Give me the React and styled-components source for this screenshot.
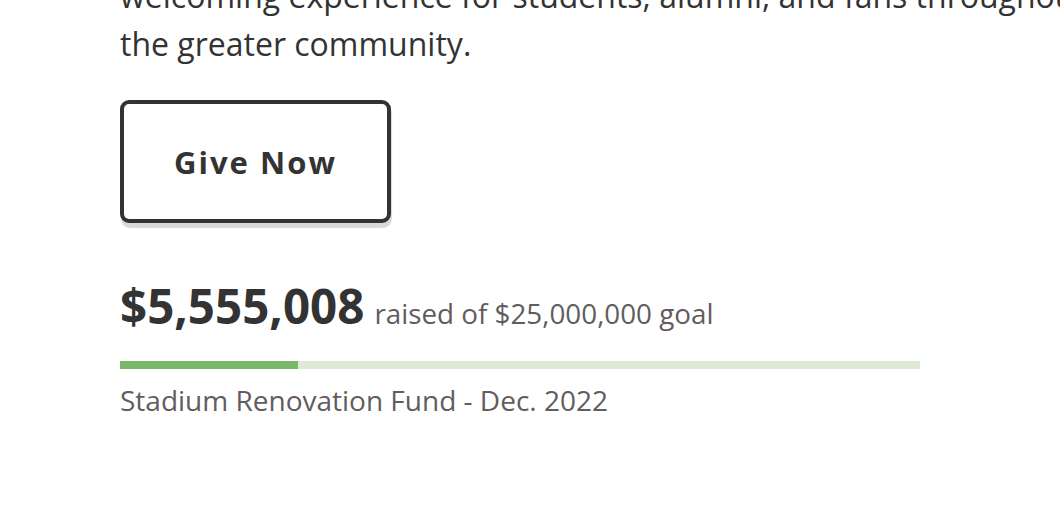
import React from 'react'
import styled, { createGlobalStyle } from 'styled-components'

const GlobalStyle = createGlobalStyle`
  html, body {
    margin: 0;
    padding: 0;
    background: #fff;
    overflow: hidden;
  }
  body {
    font-family: "Open Sans", "Noto Sans", sans-serif;
    color: #333;
  }
`;

const Container = styled.div`
  width: 1060px;
  height: 528px;
  overflow: hidden;
  padding-left: 120px;
  box-sizing: border-box;
`;

const Intro = styled.p`
  margin: -28px 0 0;
  font-size: 32px;
  line-height: 48px;
  color: #333;
  white-space: nowrap;
`;

const GiveButton = styled.button`
  display: block;
  margin-top: 32px;
  width: 271px;
  height: 123px;
  border: 4px solid #333;
  border-radius: 9px;
  background: #fff;
  box-shadow: 1px 5px 1px #d9d9d9;
  font-family: "Open Sans", sans-serif;
  font-weight: 700;
  font-size: 31px;
  letter-spacing: 2px;
  color: #333;
  cursor: pointer;
`;

const Totals = styled.div`
  display: flex;
  align-items: baseline;
  gap: 10px;
  margin-top: 59px;
`;

const Raised = styled.span`
  font-size: 47.5px;
  font-weight: 700;
  color: #333;
  line-height: 1;
`;

const Goal = styled.span`
  font-size: 27.8px;
  color: #625c5e;
`;

const Track = styled.div`
  width: 800px;
  height: 8px;
  margin-top: 29px;
  background: #dde8d7;
`;

const Fill = styled.div`
  height: 100%;
  background: #78b868;
`;

const Caption = styled.div`
  margin-top: 12px;
  font-size: 28px;
  color: #625c5e;
`;

const raised = 5555008
const goal = 25000000

const App = () => {
  const pct = (raised / goal) * 100
  return (
    <Container>
      <GlobalStyle />
      <Intro>
        welcoming experience for students, alumni, and fans throughout
        <br />
        the greater community.
      </Intro>
      <GiveButton>Give Now</GiveButton>
      <Totals>
        <Raised>$5,555,008</Raised>
        <Goal>raised of $25,000,000 goal</Goal>
      </Totals>
      <Track>
        <Fill style={{ width: pct + '%' }} />
      </Track>
      <Caption>Stadium Renovation Fund - Dec. 2022</Caption>
    </Container>
  )
}

export default App
